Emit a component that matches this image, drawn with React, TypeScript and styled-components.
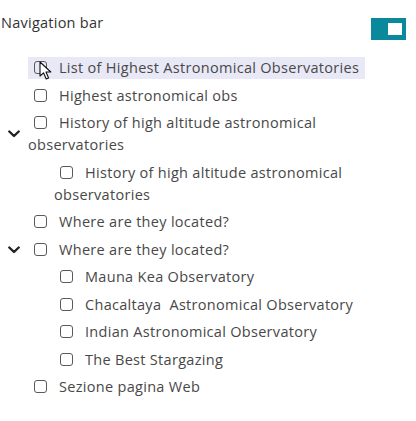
import React from "react";
import styled, { createGlobalStyle } from "styled-components";

const GlobalStyle = createGlobalStyle`
  body {
    margin: 0;
    background: #ffffff;
    font-family: "Open Sans", "Lato", sans-serif;
  }
`;

const Panel = styled.div`
  width: 416px;
  height: 421px;
  box-sizing: border-box;
  padding: 12px 10px 0 1px;
`;

const Header = styled.div`
  display: flex;
  justify-content: space-between;
  align-items: flex-start;
  height: 45px;
`;

const Title = styled.div`
  font-size: 14.5px;
  line-height: 22px;
  letter-spacing: 0.25px;
  color: #333;
`;

const Toggle = styled.div`
  width: 35px;
  height: 22px;
  margin-top: 6px;
  background: #0b899c;
  display: flex;
  justify-content: flex-end;
  align-items: center;
  padding-right: 4px;
  box-sizing: border-box;
`;

const Knob = styled.span`
  width: 14px;
  height: 12px;
  background: #fff;
`;

const Tree = styled.div`
  display: flex;
  flex-direction: column;
  gap: 5.5px;
`;

const Item = styled.div<{ $level: number }>`
  display: flex;
  align-items: center;
  padding-left: ${({ $level }) => $level * 26}px;
  margin-left: -1px;
`;

const Gutter = styled.div`
  width: 27px;
  flex: none;
  display: flex;
  justify-content: center;
  padding-right: 1px;
  color: #222;
`;

const Label = styled.div<{ $hover?: boolean }>`
  position: relative;
  font-size: 14.5px;
  line-height: 22px;
  letter-spacing: 0.3px;
  color: #484848;
  padding-right: 6px;
  background: ${({ $hover }) => ($hover ? "#e8e8f7" : "transparent")};
`;

const Box = styled.span`
  display: inline-block;
  width: 11px;
  height: 11px;
  border: 1px solid #5a5a5a;
  border-radius: 3px;
  margin: 0 12px 0 6px;
  vertical-align: -1px;
`;

const Cursor = styled.svg`
  position: absolute;
  left: 11px;
  top: 4px;
`;

const Chevron = () => (
  <svg width="12" height="8" viewBox="0 0 12 8">
    <polyline
      points="1.3,1.5 6,6 10.7,1.5"
      fill="none"
      stroke="currentColor"
      strokeWidth="2.4"
      strokeLinecap="round"
      strokeLinejoin="round"
    />
  </svg>
);

type Node = { label: string; open?: boolean; hover?: boolean; children?: Node[] };

const data: Node[] = [
  { label: "List of Highest Astronomical Observatories", hover: true },
  { label: "Highest astronomical obs" },
  {
    label: "History of high altitude astronomical observatories",
    open: true,
    children: [{ label: "History of high altitude astronomical observatories" }],
  },
  { label: "Where are they located?" },
  {
    label: "Where are they located?",
    open: true,
    children: [
      { label: "Mauna Kea Observatory" },
      { label: "Chacaltaya\u00a0 Astronomical Observatory" },
      { label: "Indian Astronomical Observatory" },
      { label: "The Best Stargazing" },
    ],
  },
  { label: "Sezione pagina Web" },
];

const renderNodes = (nodes: Node[], level: number): React.ReactNode[] =>
  nodes.flatMap((node, i) => [
    <Item $level={level} key={`${level}-${i}-${node.label}`}>
      <Gutter>{node.open && <Chevron />}</Gutter>
      <Label $hover={node.hover}>
        <Box />
        {node.label}
        {node.hover && (
          <Cursor width="13" height="20" viewBox="0 0 13 20">
            <path
              d="M1 1 L1 15 L4.5 11.8 L7.2 18 L9.6 17 L7 11 L11.8 11 Z"
              fill="#fff"
              stroke="#111"
              strokeWidth="1.1"
              strokeLinejoin="round"
            />
          </Cursor>
        )}
      </Label>
    </Item>,
    ...(node.children ? renderNodes(node.children, level + 1) : []),
  ]);

export default function App() {
  return (
    <>
      <GlobalStyle />
      <Panel>
        <Header>
          <Title>Navigation bar</Title>
          <Toggle>
            <Knob />
          </Toggle>
        </Header>
        <Tree>{renderNodes(data, 0)}</Tree>
      </Panel>
    </>
  );
}
